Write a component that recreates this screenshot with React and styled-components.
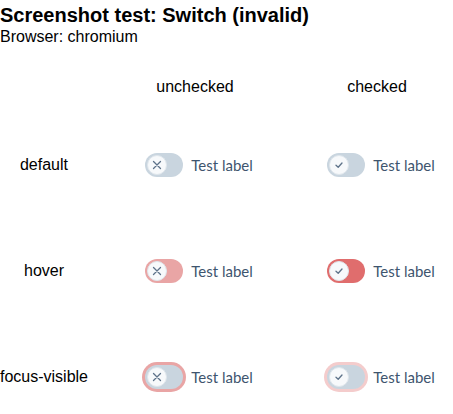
import React from 'react'
import styled, { createGlobalStyle, css } from 'styled-components';

const GlobalStyle = createGlobalStyle`
  body {
    margin: 0;
    font-family: "Liberation Sans", Arial, sans-serif;
    background: #ffffff;
    color: #000000;
  }
`;

const Title = styled.h1`
  margin: 0;
  font-size: 20px;
  font-weight: bold;
  line-height: 24px;
  padding-top: 3px;
`;

const Subtitle = styled.div`
  font-size: 16px;
  line-height: 20px;
`;

const Grid = styled.div`
  display: grid;
  grid-template-columns: 88px 150px 150px;
  grid-template-rows: 50px 106px 106px 106px;
  column-gap: 32px;
  margin-top: 15px;
`;

const Head = styled.div`
  display: flex;
  align-items: center;
  justify-content: center;
  font-size: 16px;
  white-space: nowrap;
`;

const Cell = styled.div`
  display: flex;
  align-items: center;
  justify-content: center;
  padding-left: 8px;
`;

const tracks = {
  default: { off: '#c9d5df', on: '#c9d5df' },
  hover: { off: '#e9a5a5', on: '#e06d6d' },
  focus: { off: '#c9d5df', on: '#c9d5df' },
};

const rings = { off: '#e9a5a5', on: '#f4cccc' };

const Label = styled.label`
  display: inline-flex;
  align-items: center;
  gap: 8px;
  font-family: Lato, "Noto Sans", sans-serif;
  font-size: 15px;
  color: #3e556e;
`;

const Track = styled.span`
  box-sizing: border-box;
  display: inline-flex;
  align-items: center;
  width: 38px;
  height: 24px;
  padding: 2px;
  border-radius: 12px;
  background: ${p => tracks[p.$state][p.$checked ? 'on' : 'off']};
  ${p => p.$state === 'focus' && css`
    box-shadow: 0 0 0 3px ${rings[p.$checked ? 'on' : 'off']};
  `}
`;

const Knob = styled.span`
  box-sizing: border-box;
  display: flex;
  align-items: center;
  justify-content: center;
  width: 20px;
  height: 20px;
  border-radius: 50%;
  background: #f7f9fb;
  border: 1px solid #dfe6ec;
`;

const CrossIcon = () => (
  <svg width="10" height="10" viewBox="0 0 10 10">
    <path d="M1.5 1.5 L8.5 8.5 M8.5 1.5 L1.5 8.5" stroke="#5d7289" strokeWidth="1.3" strokeLinecap="round" fill="none" />
  </svg>
);

const CheckIcon = () => (
  <svg width="10" height="10" viewBox="0 0 10 10">
    <path d="M2 5.3 L4.2 7.3 L8 3" stroke="#5d7289" strokeWidth="1.3" strokeLinecap="round" strokeLinejoin="round" fill="none" />
  </svg>
);

const Switch = ({ state, checked }) => (
  <Label>
    <Track $state={state} $checked={checked} role="switch" aria-checked={checked} aria-invalid="true">
      <Knob>{checked ? <CheckIcon /> : <CrossIcon />}</Knob>
    </Track>
    Test label
  </Label>
);

const rows = [
  { key: 'default', name: 'default' },
  { key: 'hover', name: 'hover' },
  { key: 'focus', name: 'focus-visible' },
];

const App = () => (
  <>
    <GlobalStyle />
    <Title>Screenshot test: Switch (invalid)</Title>
    <Subtitle>Browser: chromium</Subtitle>
    <Grid>
      <div />
      <Head>unchecked</Head>
      <Head>checked</Head>
      {rows.map(r => (
        <React.Fragment key={r.key}>
          <Head>{r.name}</Head>
          <Cell><Switch state={r.key} checked={false} /></Cell>
          <Cell><Switch state={r.key} checked /></Cell>
        </React.Fragment>
      ))}
    </Grid>
  </>
);

export default App;
